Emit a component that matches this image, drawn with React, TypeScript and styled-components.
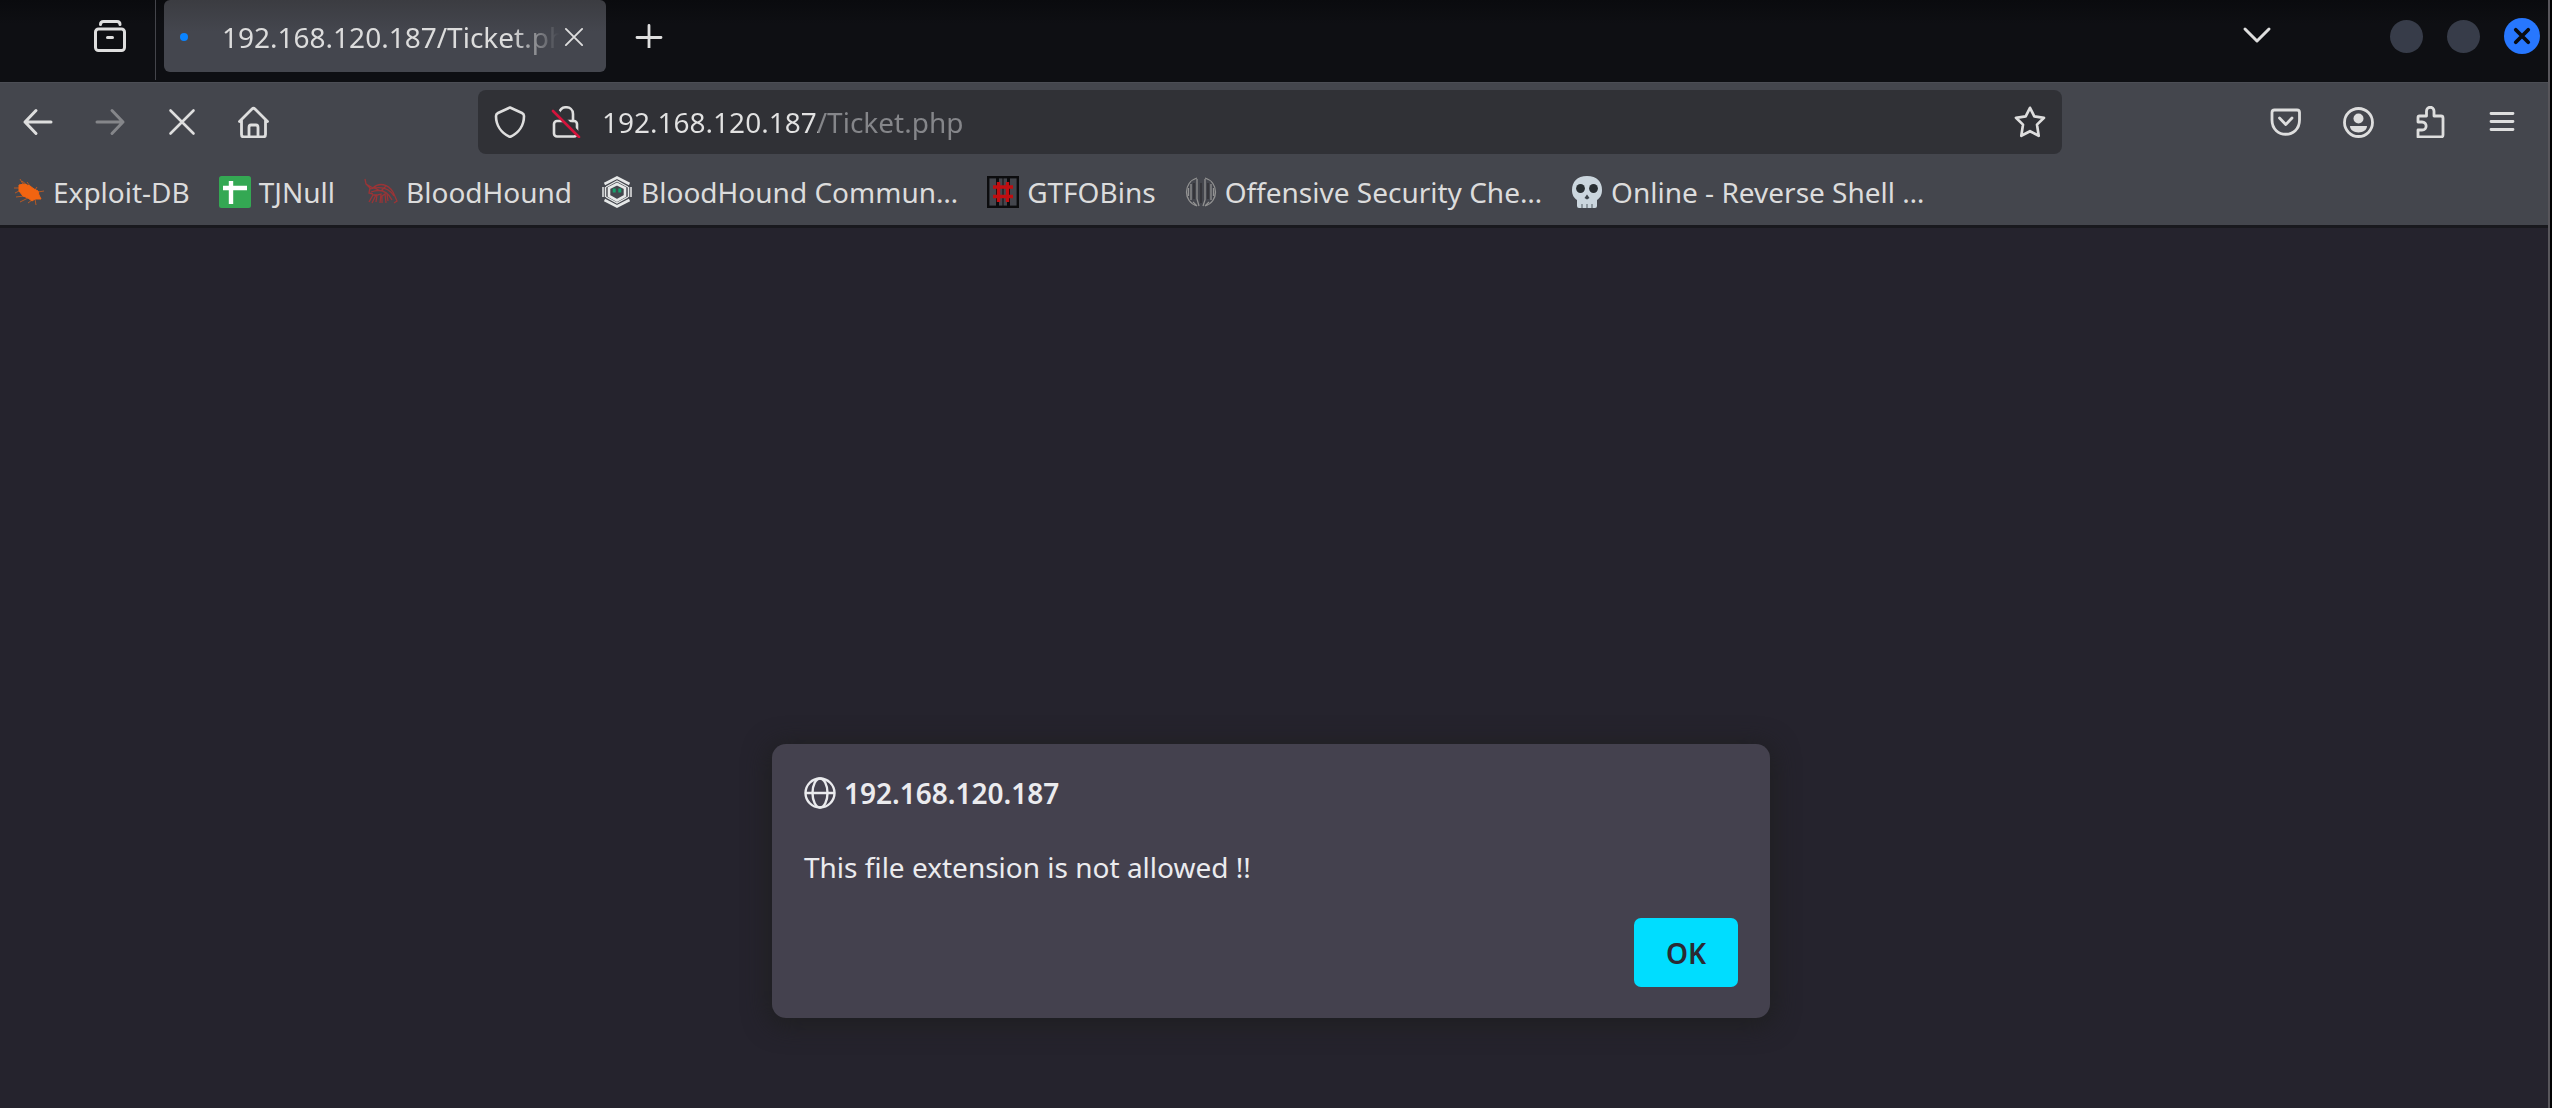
import React from "react";
import styled, { createGlobalStyle } from "styled-components";

const GlobalStyle = createGlobalStyle`
  * { box-sizing: border-box; }
  body { margin: 0; background: #030304; }
  body, button, input { font-family: "Noto Sans", sans-serif; font-size: 28px; line-height: 38px; }
`;

const Window = styled.div`
  display: flex;
  flex-direction: column;
  min-height: 100vh;
  margin-right: 2px;
  border-right: 2px solid #58565b;
  background: #25232d;
  color: #dcdcdc;
  overflow: hidden;
`;

const IconButton = styled.button<{ $w?: number; $dim?: boolean }>`
  display: flex;
  flex: none;
  align-items: center;
  justify-content: center;
  width: ${(p) => p.$w ?? 72}px;
  height: 64px;
  padding: 0;
  border: 0;
  background: none;
  color: ${(p) => (p.$dim ? "#85868a" : "#dedede")};
`;

const TabStrip = styled.header`
  display: flex;
  height: 82px;
  background: linear-gradient(#0a0b0e, #0e0f13 24px);
`;

const ViewCell = styled.div`
  display: flex;
  justify-content: flex-end;
  width: 156px;
  padding: 4px 10px 0 0;
  border-right: 1px solid #44454b;
  margin-bottom: 2px;
`;

const Tab = styled.div`
  display: flex;
  align-items: center;
  width: 442px;
  height: 72px;
  margin-left: 8px;
  padding: 2px 17px 0 16px;
  border-radius: 6px;
  background: linear-gradient(#3b3c41, #44464e 32px);
`;

const Loading = styled.span`
  width: 8px;
  height: 8px;
  margin-right: 34px;
  border-radius: 50%;
  background: #0a84ff;
`;

const TabTitle = styled.span`
  flex: 1;
  overflow: hidden;
  white-space: nowrap;
  mask-image: linear-gradient(to left, transparent, #000 48px);
`;

const Push = styled.div`
  flex: 1;
`;

const WindowControls = styled.div`
  display: flex;
  align-items: center;
  gap: 24px;
  height: 72px;
  padding: 0 8px 0 97px;
`;

const WindowButton = styled.button<{ $close?: boolean }>`
  display: flex;
  align-items: center;
  justify-content: center;
  width: ${(p) => (p.$close ? 36 : 33)}px;
  height: ${(p) => (p.$close ? 36 : 33)}px;
  padding: 0;
  border: 0;
  border-radius: 50%;
  background: ${(p) => (p.$close ? "#2777ff" : "#373c49")};
  color: #0a0b10;
`;

const Toolbars = styled.div`
  background: #44464d;
  border-top: 1px solid #4c4e55;
  border-bottom: 3px solid #19191e;
`;

const NavBar = styled.nav`
  display: flex;
  align-items: center;
  height: 78px;
  padding: 0 10px 0 2px;
`;

const Spacer = styled.div`
  flex: 0 1 188px;
`;

const UrlBar = styled.form`
  display: flex;
  flex: 1;
  align-items: center;
  height: 64px;
  padding: 0 2px 0 6px;
  border-radius: 8px;
  background: #303136;
`;

const UrlInput = styled.input`
  flex: 1;
  min-width: 0;
  height: 40px;
  padding: 0;
  border: 0;
  margin-left: 6px;
  outline: 0;
  color: #e2e2e2;
  background: linear-gradient(90deg, #e2e2e2 216px, #85868a 216px);
  background-clip: text;
  -webkit-background-clip: text;
  -webkit-text-fill-color: transparent;
`;

const Bookmarks = styled.nav`
  display: flex;
  gap: 29px;
  height: 64px;
  padding: 0 13px;
`;

const Bookmark = styled.a`
  display: flex;
  align-items: center;
  gap: 8px;
  height: 64px;
  padding-bottom: 2px;
  color: inherit;
  text-decoration: none;
  white-space: nowrap;
`;

const Page = styled.main`
  display: flex;
  flex: 1;
  align-items: flex-end;
  justify-content: center;
  padding: 0 6px 90px 0;
`;

const Dialog = styled.section`
  width: 998px;
  padding: 30px 32px 31px;
  border-radius: 14px;
  background: #44414e;
  color: #ebebee;
  box-shadow: 0 4px 24px 4px #1f1f21;
`;

const DialogTitle = styled.h1`
  display: flex;
  align-items: center;
  gap: 8px;
  margin: 0;
  font-size: 28px;
  line-height: 38px;
  font-weight: 600;
`;

const Message = styled.p`
  margin: 36px 0 32px;
`;

const Actions = styled.div`
  display: flex;
  justify-content: flex-end;
`;

const OkButton = styled.button`
  width: 104px;
  height: 69px;
  padding: 0;
  border: 0;
  border-radius: 7px;
  background: #00ddff;
  color: #2b2a33;
  font-weight: 600;
`;

type IconProps = { size?: number; width?: number; children: React.ReactNode };
const Icon = ({ size = 32, width = 3, children }: IconProps) => (
  <svg width={size} height={size} viewBox="0 0 32 32" fill="none" stroke="currentColor" strokeWidth={width} strokeLinecap="round" strokeLinejoin="round" aria-hidden="true">
    {children}
  </svg>
);

const ViewIcon = () => (
  <Icon>
    <path d="M6.500 4.500 Q6.500 1.500 9.500 1.500 H23 Q26 1.500 26 4.500" />
    <rect x="1.500" y="9" width="29" height="21.500" rx="3" />
    <path d="M13.500 17.500 H18.500" />
  </Icon>
);
const ShieldIcon = () => (
  <Icon width={2.6}>
    <path d="M16 1.500 L28 7 Q30 8 30 10 C30 19 25 27 16 31 C7 27 2 19 2 10 Q2 8 4 7 Z" />
  </Icon>
);
const InsecureIcon = () => (
  <Icon width={2.6}>
    <path d="M9 8 C9 -1 23 -1 23 8 V15" />
    <rect x="4" y="15" width="23" height="15.500" rx="3" />
    <path d="M6 5 L31 31" stroke="#303136" strokeWidth="5" />
    <path d="M3 5 L29 31" stroke="#d4143c" />
  </Icon>
);

const HexMark = () => (
  <svg width="32" height="32" viewBox="0 0 32 32" fill="none" stroke="#e6e8e8" aria-hidden="true">
    <path d="M3.500 8 L16 1.500 L28.500 8 M3.500 24 L16 30.500 L28.500 24" strokeWidth="2.600" />
    <path d="M5 11 L16 5 L27 11 M5 21 L16 27 L27 21" strokeWidth="1.200" />
    <path d="M2 11 V21 M30 11 V21 M4.500 11 V21 M27.500 11 V21" strokeWidth="1.500" />
    <path d="M16 8 L24 12 V20 L16 24.500 L8 20 V12 Z" strokeWidth="2.600" />
    <path d="M13.200 12.500 V16.500 M18.800 12.500 V16.500" stroke="#16a06c" strokeWidth="3" />
  </svg>
);
const BugMark = () => (
  <svg width="32" height="32" viewBox="0 0 32 32" fill="#f26411" stroke="#f26411" aria-hidden="true">
    <path d="M6 9 L11 8 L17 10 L21 13 L25 15 L26 19 L28 23 L22 23 L19 25 L15 22 L10 20 L6 15 Z" />
    <path d="M10 8 L7 3 M14 9 L9 5 M17 10 L14 6 M22 14 L24 11 M25 16 L31 15 M6 12 L1 12 M6 15 L2 17 M11 20 L3 21 M15 22 L7 26 M19 24 L15 27 M22 23 L23 29" strokeWidth="1" opacity=".65" />
  </svg>
);
const SheetMark = () => (
  <svg width="32" height="32" viewBox="0 0 32 32" aria-hidden="true">
    <rect width="32" height="32" rx="2.500" fill="#34a853" />
    <path d="M12 5 V28 M4 12 H28" stroke="#fff" strokeWidth="4.400" />
  </svg>
);
const HoundMark = () => (
  <svg width="34" height="32" viewBox="0 0 34 32" fill="none" stroke="#9b3436" strokeWidth="1.300" aria-hidden="true">
    <path d="M1 3 L2 8 L6 12 L5 17 L9 18 M2 8 L9 12 C15 6 24 8 29 16 L33 25 L30 27 M6 13 C13 11 24 10 30 20 M7 16 C15 13 23 14 28 24 M5 26 L9 19 L12 19 L8 27 M12 26 L13 19 L17 18 L16 27 M18 27 L18 20 L21 18 L22 27 M24 25 L23 18 M10 12 L17 15 L22 10" />
  </svg>
);
const GtfoMark = () => (
  <svg width="32" height="32" viewBox="0 0 32 32" fill="none" aria-hidden="true">
    <rect x="1.200" y="1.200" width="29.600" height="29.600" stroke="#0c0c0e" strokeWidth="2.400" />
    <path d="M10.500 2 V30 M21.500 2 V30" stroke="#0c0c0e" strokeWidth="3" />
    <path d="M16 2 V30" stroke="#0c0c0e" strokeWidth="1" />
    <path d="M11.500 6 V26 M20.500 6 V26 M6 11 H26 M6 20.500 H26" stroke="#c10d10" strokeWidth="3.400" />
  </svg>
);
const OffsecMark = () => (
  <svg width="32" height="32" viewBox="0 0 32 32" fill="none" stroke="#929292" strokeWidth="1.300" aria-hidden="true">
    <path d="M12 2 C-2 6 -2 26 12 30 M20 2 C34 6 34 26 20 30 M6 8 V24 M12 3 V23 L14 30 M20 3 V24 L18 30 M26 8 V24 M8 26 L12 30 M24 26 L20 30 M3.500 12 V20 M28.500 12 V20" />
    <path d="M9 7 V23 M23 7 V23 M16 7 V27" stroke="#35353a" strokeWidth="2" />
  </svg>
);
const SkullMark = () => (
  <svg width="32" height="32" viewBox="0 0 32 32" aria-hidden="true">
    <path d="M16 0 C6 0 1 6 1 14 C1 19 3 22 6 24 V30 Q6 32 8 32 H24 Q26 32 26 30 V24 C29 22 31 19 31 14 C31 6 26 0 16 0 Z" fill="#cbd6de" />
    <ellipse cx="9.500" cy="12.500" rx="4.400" ry="4.600" fill="#292f33" />
    <ellipse cx="22.500" cy="12.500" rx="4.400" ry="4.600" fill="#292f33" />
    <path d="M16 18.500 L18.500 22 L16 23.500 L13.500 22 Z" fill="#3c444a" />
    <path d="M11 28 V32 M16 28 V32 M21 28 V32" stroke="#6d777e" strokeWidth="1.300" />
  </svg>
);

const bookmarks = [
  { label: "Exploit-DB", mark: <BugMark /> },
  { label: "TJNull", mark: <SheetMark /> },
  { label: "BloodHound", mark: <HoundMark /> },
  { label: "BloodHound Commun…", mark: <HexMark /> },
  { label: "GTFOBins", mark: <GtfoMark /> },
  { label: "Offensive Security Che…", mark: <OffsecMark /> },
  { label: "Online - Reverse Shell …", mark: <SkullMark /> },
];

export default function App() {
  return (
    <Window>
      <GlobalStyle />
      <TabStrip>
        <ViewCell>
          <IconButton $w={70} aria-label="View recent browsing"><ViewIcon /></IconButton>
        </ViewCell>
        <Tab>
          <Loading />
          <TabTitle>192.168.120.187/Ticket.php</TabTitle>
          <IconButton $w={30} aria-label="Close tab">
            <Icon size={20} width={3}><path d="M3 3 L29 29 M29 3 L3 29" /></Icon>
          </IconButton>
        </Tab>
        <IconButton $w={86} aria-label="New tab">
          <Icon width={2.8}><path d="M16 9.500 V33 M4 21.500 H28" /></Icon>
        </IconButton>
        <Push />
        <IconButton aria-label="List all tabs">
          <Icon width={3}><path d="M4 13 L16 25 L28 13" /></Icon>
        </IconButton>
        <WindowControls>
          <WindowButton aria-label="Minimize" />
          <WindowButton aria-label="Maximize" />
          <WindowButton $close aria-label="Close window">
            <Icon size={20} width={6}><path d="M6 6 L26 26 M26 6 L6 26" /></Icon>
          </WindowButton>
        </WindowControls>
      </TabStrip>

      <Toolbars>
        <NavBar>
          <IconButton aria-label="Back">
            <Icon><path d="M29 16 H3 M14 4.500 L3 16 L14 27.500" /></Icon>
          </IconButton>
          <IconButton $dim aria-label="Forward">
            <Icon><path d="M3 16 H29 M18 4.500 L29 16 L18 27.500" /></Icon>
          </IconButton>
          <IconButton aria-label="Stop">
            <Icon width={2.6}><path d="M4.500 4.500 L27.500 27.500 M27.500 4.500 L4.500 27.500" /></Icon>
          </IconButton>
          <IconButton aria-label="Home">
            <Icon width={2.8}>
              <path d="M1.500 15.500 L14 3 Q15.500 1.500 17 3 L29.500 15.500 M3.500 14 V28.500 Q3.500 31 6 31 H25 Q27.500 31 27.500 28.500 V14 M11 30.500 V21.500 Q11 19 13 19 H18 Q20 19 20 21.500 V30.500" />
            </Icon>
          </IconButton>
          <Spacer />
          <UrlBar>
            <IconButton type="button" $w={52} aria-label="Tracking protection"><ShieldIcon /></IconButton>
            <IconButton type="button" $w={60} aria-label="Connection is not secure"><InsecureIcon /></IconButton>
            <UrlInput aria-label="Address" defaultValue="192.168.120.187/Ticket.php" />
            <IconButton type="button" $w={60} aria-label="Bookmark this page">
              <Icon width={2.7}><path d="M16 1.800 L20.300 10.400 L30 11.800 L23 18.600 L24.700 29.800 L16 25.200 L7.300 29.800 L9 18.600 L2 11.800 L11.700 10.400 Z" /></Icon>
            </IconButton>
          </UrlBar>
          <Spacer />
          <IconButton aria-label="Save to Pocket">
            <Icon width={2.8}>
              <path d="M4.500 4 H27 Q29.500 4 29.500 6.500 V14 C29.500 33 2 33 2 14 V6.500 Q2 4 4.500 4 Z M9.500 12 L15.750 18.500 L22 12" />
            </Icon>
          </IconButton>
          <IconButton aria-label="Account">
            <Icon width={2.8}>
              <circle cx="16.500" cy="16.500" r="14" />
              <circle cx="16.500" cy="12.500" r="5" fill="currentColor" stroke="none" />
              <path d="M8 20 H25 C25 28.500 8 28.500 8 20 Z" fill="currentColor" stroke="none" />
            </Icon>
          </IconButton>
          <IconButton aria-label="Extensions">
            <Icon width={2.8}>
              <path d="M4 31 V24 H8 C13.500 24 13.500 16 8 16 H4 V11.500 Q4 10 5.500 10 H12.500 V5 C12.500 0 20 0 20 5 V10 H27 Q29 10 29 12 V29 Q29 31 27 31 Z" />
            </Icon>
          </IconButton>
          <IconButton aria-label="Open menu">
            <Icon width={2.8}><path d="M5 7.500 H27 M5 15.500 H27 M5 23.500 H27" /></Icon>
          </IconButton>
        </NavBar>
        <Bookmarks aria-label="Bookmarks">
          {bookmarks.map((b) => (
            <Bookmark key={b.label} href="#">
              {b.mark}
              <span>{b.label}</span>
            </Bookmark>
          ))}
        </Bookmarks>
      </Toolbars>

      <Page>
        <Dialog role="alertdialog" aria-labelledby="origin" aria-describedby="message">
          <DialogTitle id="origin">
            <Icon width={2.4}>
              <circle cx="16" cy="16" r="14.500" />
              <ellipse cx="16" cy="16" rx="7.500" ry="14.500" />
              <path d="M2 16 H30" />
            </Icon>
            192.168.120.187
          </DialogTitle>
          <Message id="message">This file extension is not allowed !!</Message>
          <Actions><OkButton>OK</OkButton></Actions>
        </Dialog>
      </Page>
    </Window>
  );
}
